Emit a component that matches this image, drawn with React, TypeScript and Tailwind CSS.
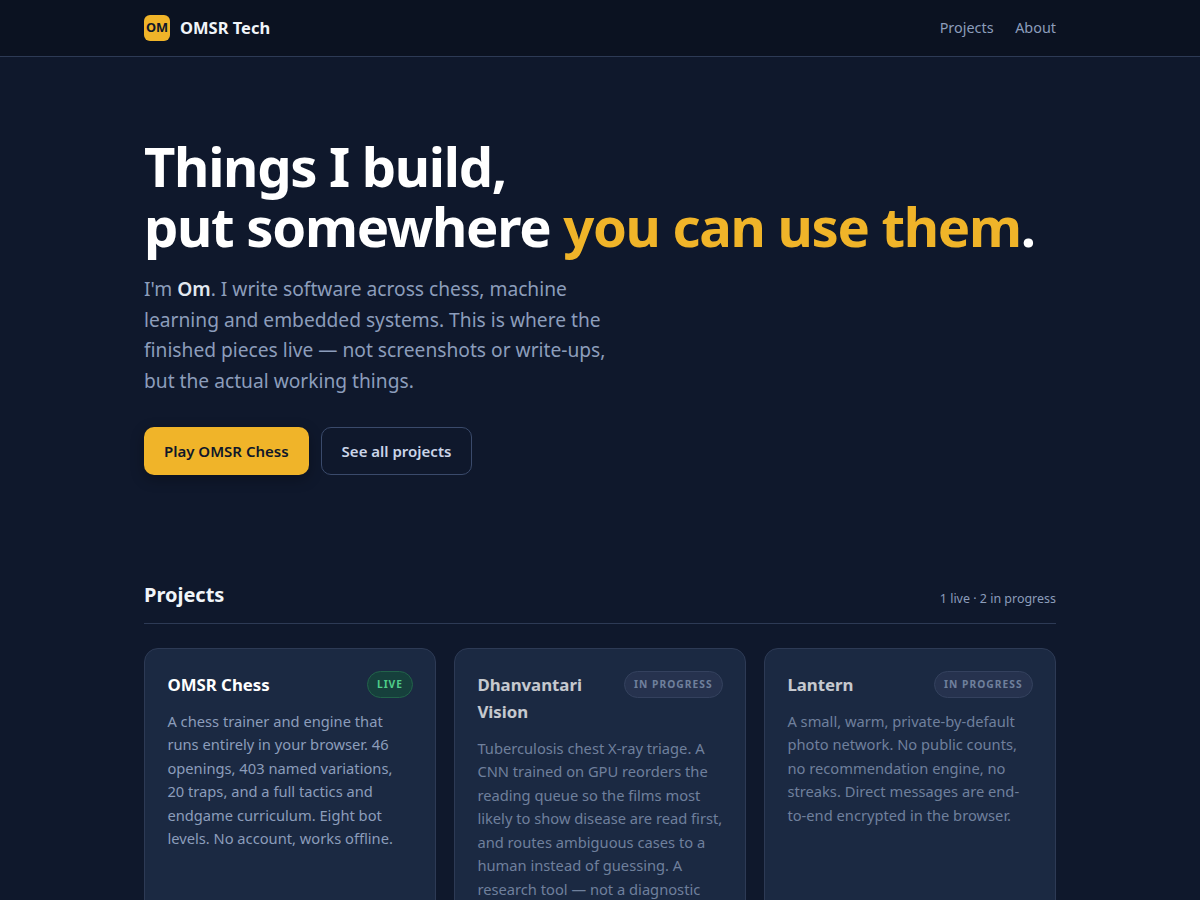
const font = { fontFamily: '"Noto Sans", sans-serif' };

function Badge({ live, children }: { live?: boolean; children: string }) {
  return (
    <span
      className={
        live
          ? 'shrink-0 rounded-full border border-[#22634a] bg-[#16403c] px-[8.8px] py-[4px] text-[10.24px] leading-[17px] font-bold tracking-[0.09em] text-[#4fce8a]'
          : 'shrink-0 rounded-full border border-[#3d4a68] bg-[#2a3652] px-[9px] py-[4px] text-[10.24px] leading-[17px] font-bold tracking-[0.1em] text-[#8c9dbb]'
      }
    >
      {children}
    </span>
  );
}

function Card({
  title,
  badge,
  live,
  children,
}: {
  title: string;
  badge: string;
  live?: boolean;
  children: string;
}) {
  return (
    <div className="min-h-[300px] rounded-[14px] border border-[#2d3a55] bg-[#1b2942] p-[22.4px]">
      <div className={live ? '' : 'opacity-75'}>
        <div className="mb-[11.6px] flex items-start justify-between gap-3">
          <h3 className="text-[16.8px] leading-[27px] font-bold text-white">{title}</h3>
          <Badge live={live}>{badge}</Badge>
        </div>
        <p className="text-[14.7px] leading-[23.5px] text-[#8c9dbb]">{children}</p>
      </div>
    </div>
  );
}

export default function App() {
  return (
    <div className="h-[900px] overflow-hidden bg-[#0f182c]" style={font}>
      <nav className="border-b border-[#2d3a55] bg-[#0b1221]">
        <div className="mx-auto flex h-[56px] max-w-[912px] items-center justify-between">
          <div className="flex items-center gap-[10px]">
            <div className="flex h-[26px] w-[26px] items-center justify-center rounded-[6px] bg-[#f0b429] text-[12.8px] font-bold text-[#0f172a]">
              OM
            </div>
            <span className="mb-[1px] text-[16.48px] leading-[24px] font-bold text-[#f1f5f9]">OMSR Tech</span>
          </div>
          <div className="flex items-center gap-[21.6px] text-[14.4px] leading-[20px] text-[#8c9dbb]">
            <a>Projects</a>
            <a>About</a>
          </div>
        </div>
      </nav>

      <main className="mx-auto max-w-[912px]">
        <section className="pt-[79px] pb-[105px]">
          <h1 className="text-[54.4px] leading-[60px] font-bold tracking-[-0.024em] text-white">
            Things I build,
            <br />
            put somewhere <span className="text-[#f0b429]">you can use them</span>.
          </h1>
          <p className="mt-[18px] max-w-[480px] text-[19.2px] leading-[30.72px] text-[#8c9dbb]">
            I'm <strong className="font-semibold text-[#e2e8f0]">Om</strong>. I write software across chess, machine
            learning and embedded systems. This is where the finished pieces live — not screenshots or write-ups, but
            the actual working things.
          </p>
          <div className="mt-[30px] flex gap-3">
            <a className="flex h-[48px] items-center rounded-[10px] bg-[#f0b429] px-5 text-[15px] font-semibold text-[#0f172a] shadow-[0_4px_14px_rgba(0,0,0,0.3)]">
              Play OMSR Chess
            </a>
            <a className="flex h-[48px] items-center rounded-[10px] border border-[#3a4a6b] px-5 text-[15px] font-semibold text-[#cbd5e8]">
              See all projects
            </a>
          </div>
        </section>

        <section>
          <div className="mb-6 flex items-end justify-between border-b border-[#2d3a55] pb-[13px]">
            <h2 className="text-[20px] font-bold text-[#f1f5f9]">Projects</h2>
            <span className="pb-[1.5px] text-[12.48px] text-[#8c9dbb]">1 live · 2 in progress</span>
          </div>
          <div className="grid grid-cols-3 gap-[18px]">
            <Card title="OMSR Chess" badge="LIVE" live>
              A chess trainer and engine that runs entirely in your browser. 46 openings, 403 named variations, 20
              traps, and a full tactics and endgame curriculum. Eight bot levels. No account, works offline.
            </Card>
            <Card title="Dhanvantari Vision" badge="IN PROGRESS">
              Tuberculosis chest X-ray triage. A CNN trained on GPU reorders the reading queue so the films most likely
              to show disease are read first, and routes ambiguous cases to a human instead of guessing. A research
              tool — not a diagnostic device.
            </Card>
            <Card title="Lantern" badge="IN PROGRESS">
              A small, warm, private-by-default photo network. No public counts, no recommendation engine, no streaks.
              Direct messages are end-to-end encrypted in the browser.
            </Card>
          </div>
        </section>
      </main>
    </div>
  );
}
